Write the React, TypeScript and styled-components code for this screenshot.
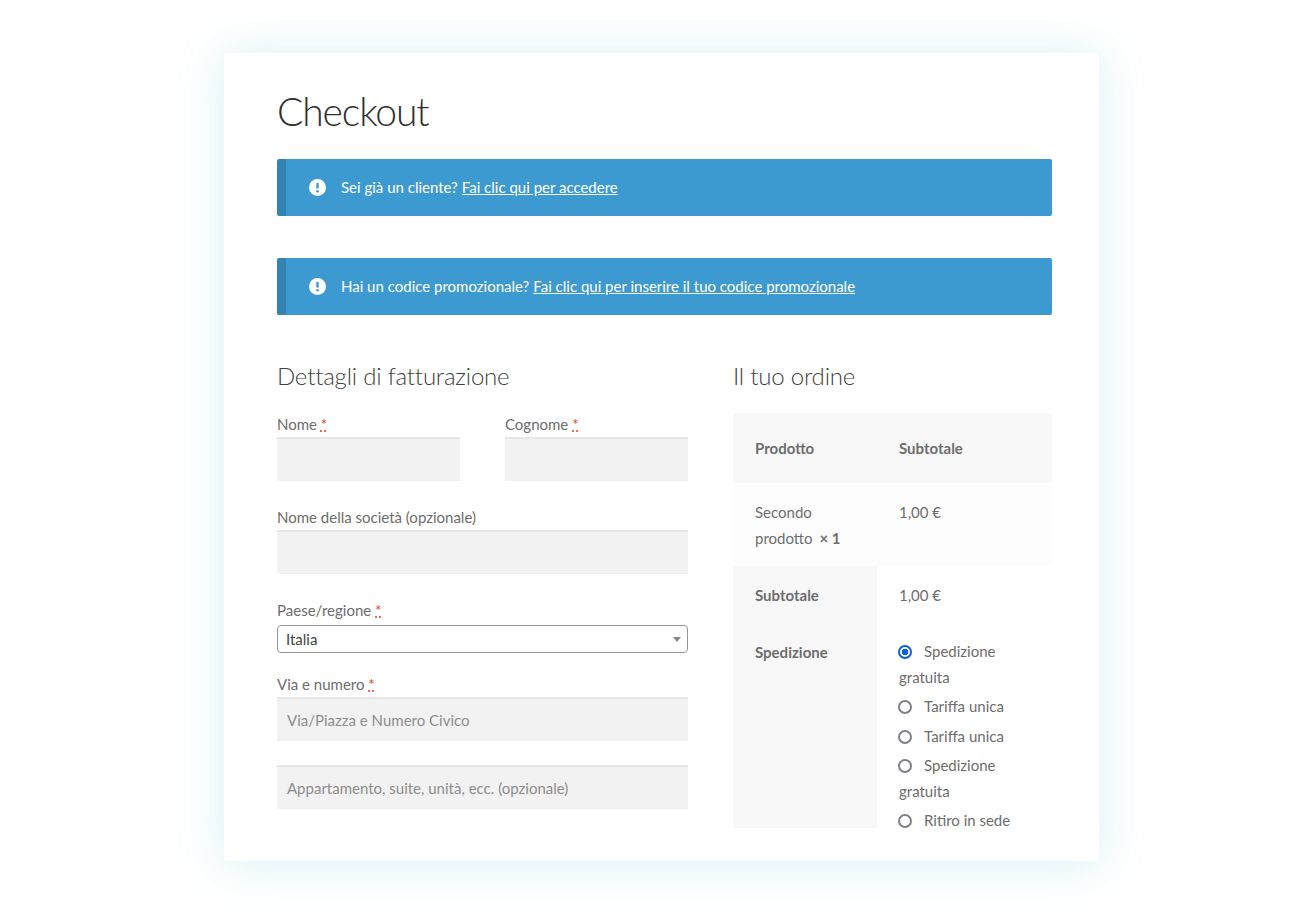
import React from "react";
import styled, { createGlobalStyle } from "styled-components";

const GlobalStyle = createGlobalStyle`
  html, body {
    margin: 0;
    padding: 0;
    background: #ffffff;
  }
  * {
    box-sizing: border-box;
  }
`;

const Page = styled.div`
  font-family: "Lato", "Noto Sans", sans-serif;
  height: 921px;
  padding: 53px 0 0 224px;
  overflow: hidden;
  color: #6d6d6d;
`;

const Card = styled.main`
  width: 875px;
  height: 808px;
  padding: 33px 47px 0 53px;
  background: #ffffff;
  border-radius: 4px;
  box-shadow: 0 2px 44px rgba(110, 200, 215, 0.27);
`;

const Title = styled.h1`
  margin: 0 0 20px;
  height: 53px;
  font-family: "Lato", sans-serif;
  font-weight: 300;
  font-size: 39px;
  line-height: 51px;
  letter-spacing: -1.1px;
  color: #2f2f2f;
`;

const Notice = styled.div`
  display: flex;
  align-items: center;
  height: 57px;
  margin-bottom: 42px;
  padding: 0 0 1px 23px;
  background: #3d9ad0;
  border-left: 9px solid #3384b3;
  border-radius: 2px;
  font-size: 15px;
  color: #ffffff;
`;

const NoticeIcon = styled.svg`
  width: 17px;
  height: 17px;
  margin-right: 15px;
  flex: none;
`;

const NoticeLink = styled.a`
  color: #ffffff;
  text-decoration: underline;
  margin-left: 4px;
`;

const Columns = styled.div`
  display: flex;
  gap: 45px;
`;

const Billing = styled.section`
  width: 411px;
  flex: none;
`;

const Order = styled.section`
  width: 319px;
  flex: none;
`;

const Heading = styled.h3`
  margin: 0 0 14px;
  height: 42px;
  padding-top: 1px;
  font-weight: 300;
  font-size: 24px;
  line-height: 36px;
  letter-spacing: -0.2px;
  color: #404040;
`;

const FieldRow = styled.div`
  display: flex;
  gap: 45px;
`;

const Field = styled.div<{ $gap?: number }>`
  flex: 1;
  margin-bottom: ${(p) => p.$gap ?? 25}px;
`;

const Label = styled.label`
  display: block;
  height: 24px;
  font-size: 15px;
  line-height: 22px;
  color: #6d6d6d;
`;

const Required = styled.abbr`
  color: #e2401c;
  text-decoration: underline dotted;
  text-underline-offset: 1px;
`;

const Input = styled.div`
  display: flex;
  align-items: center;
  height: 44px;
  padding-left: 10px;
  background: #f2f2f2;
  border-top: 2px solid #e6e6e6;
  font-size: 15px;
  color: #8d8d8d;
`;

const Select = styled.div`
  position: relative;
  display: flex;
  align-items: center;
  height: 28px;
  padding-left: 8px;
  margin-top: 2px;
  border: 1px solid #969696;
  border-radius: 4px;
  font-size: 15px;
  color: #444444;
  background: #ffffff;
`;

const Caret = styled.span`
  position: absolute;
  right: 6px;
  top: 11px;
  width: 0;
  height: 0;
  border-left: 4px solid transparent;
  border-right: 4px solid transparent;
  border-top: 5px solid #888888;
`;

const Table = styled.div`
  font-size: 15px;
  color: #6d6d6d;
`;

const HeadRow = styled.div`
  display: grid;
  grid-template-columns: 144px 1fr;
  height: 70px;
  background: #f8f8f8;
  align-items: center;
  font-weight: 700;
`;

const ItemRow = styled.div`
  display: grid;
  grid-template-columns: 144px 1fr;
  height: 83px;
  padding-top: 16px;
  background: #fdfdfd;
  line-height: 26px;
`;

const Cell = styled.div`
  padding: 0 23px 0 22px;
`;

const Quantity = styled.strong`
  font-weight: 700;
  margin-left: 3px;
`;

const Totals = styled.div`
  display: grid;
  grid-template-columns: 144px 1fr;
  grid-template-rows: 262px;
`;

const TotalsLabels = styled.div`
  background: #f8f8f8;
  padding: 16px 0 0 22px;
  font-weight: 700;
  line-height: 26px;
`;

const SpedizioneLabel = styled.div`
  margin-top: 31px;
`;

const TotalsValues = styled.div`
  padding: 16px 0 0 22px;
  line-height: 26px;
`;

const Shipping = styled.ul`
  list-style: none;
  margin: 31px 0 0;
  padding: 0;
  width: 120px;
`;

const ShippingItem = styled.li`
  margin-bottom: 4px;
  line-height: 25.5px;
`;

const Radio = styled.span<{ $checked?: boolean }>`
  display: inline-block;
  width: 14px;
  height: 14px;
  margin: 0 12px 0 -1px;
  vertical-align: -2px;
  border-radius: 50%;
  border: 2px solid ${(p) => (p.$checked ? "#0f5fd8" : "#80808a")};
  background: ${(p) =>
    p.$checked
      ? "radial-gradient(circle, #0f5fd8 0 3px, #ffffff 3.6px)"
      : "#ffffff"};
`;

const noticeIcon = (
  <NoticeIcon viewBox="0 0 17 17">
    <circle cx="8.5" cy="8.5" r="8.5" fill="#fff" />
    <rect x="7.3" y="3.8" width="2.4" height="6" rx="1" fill="#3d9ad0" />
    <circle cx="8.5" cy="12.2" r="1.3" fill="#3d9ad0" />
  </NoticeIcon>
);

const shippingOptions = [
  { label: "Spedizione gratuita", checked: true },
  { label: "Tariffa unica" },
  { label: "Tariffa unica" },
  { label: "Spedizione gratuita" },
  { label: "Ritiro in sede" },
];

export default function App() {
  return (
    <Page>
      <GlobalStyle />
      <Card>
        <Title>Checkout</Title>
        <Notice>
          {noticeIcon}
          Sei già un cliente?
          <NoticeLink>Fai clic qui per accedere</NoticeLink>
        </Notice>
        <Notice>
          {noticeIcon}
          Hai un codice promozionale?
          <NoticeLink>Fai clic qui per inserire il tuo codice promozionale</NoticeLink>
        </Notice>
        <Columns>
          <Billing>
            <Heading>Dettagli di fatturazione</Heading>
            <FieldRow>
              <Field>
                <Label>
                  Nome <Required>*</Required>
                </Label>
                <Input />
              </Field>
              <Field>
                <Label>
                  Cognome <Required>*</Required>
                </Label>
                <Input />
              </Field>
            </FieldRow>
            <Field>
              <Label>Nome della società (opzionale)</Label>
              <Input />
            </Field>
            <Field $gap={20}>
              <Label>
                Paese/regione <Required>*</Required>
              </Label>
              <Select>
                Italia
                <Caret />
              </Select>
            </Field>
            <Field $gap={24}>
              <Label>
                Via e numero <Required>*</Required>
              </Label>
              <Input>Via/Piazza e Numero Civico</Input>
            </Field>
            <Input>Appartamento, suite, unità, ecc. (opzionale)</Input>
          </Billing>
          <Order>
            <Heading>Il tuo ordine</Heading>
            <Table>
              <HeadRow>
                <Cell>Prodotto</Cell>
                <Cell>Subtotale</Cell>
              </HeadRow>
              <ItemRow>
                <Cell>
                  Secondo prodotto <Quantity>× 1</Quantity>
                </Cell>
                <Cell>1,00 €</Cell>
              </ItemRow>
              <Totals>
                <TotalsLabels>
                  <div>Subtotale</div>
                  <SpedizioneLabel>Spedizione</SpedizioneLabel>
                </TotalsLabels>
                <TotalsValues>
                  <div>1,00 €</div>
                  <Shipping>
                    {shippingOptions.map((o, i) => (
                      <ShippingItem key={i}>
                        <Radio $checked={o.checked} />
                        {o.label}
                      </ShippingItem>
                    ))}
                  </Shipping>
                </TotalsValues>
              </Totals>
            </Table>
          </Order>
        </Columns>
      </Card>
    </Page>
  );
}
